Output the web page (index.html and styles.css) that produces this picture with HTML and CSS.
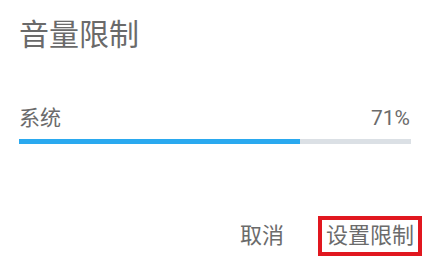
FILE: index.html
```html
<!DOCTYPE html>
<html lang="zh">
<head>
<meta charset="utf-8">
<link rel="stylesheet" href="styles.css">
</head>
<body>
<div class="dialog">
  <h1 class="title">音量限制</h1>
  <div class="row">
    <span class="label">系统</span>
    <span class="value">71%</span>
  </div>
  <div class="track"><div class="fill" style="width:71.7%"></div></div>
  <div class="actions">
    <button class="btn">取消</button>
    <button class="btn btn-marked">设置限制</button>
  </div>
</div>
</body>
</html>
```
FILE: styles.css
```css
html, body {
  margin: 0;
  padding: 0;
  background: #ffffff;
}
body {
  font-family: Roboto, "Noto Sans CJK SC", sans-serif;
  color: #6b6b6b;
}
.dialog {
  width: 433px;
  height: 259px;
  box-sizing: border-box;
  padding: 20px 22px 0 19px;
  display: flex;
  flex-direction: column;
}
.title {
  margin: 0;
  font-size: 30px;
  line-height: 30px;
  font-weight: 400;
  color: #6a6a6a;
}
.row {
  margin-top: 58px;
  display: flex;
  justify-content: space-between;
  align-items: center;
  font-size: 21px;
  line-height: 21px;
}
.value {
  margin-right: 1px;
}
.track {
  margin-top: 10px;
  height: 5px;
  background: #dbe0e5;
}
.fill {
  height: 100%;
  background: #2aa9ef;
}
.actions {
  margin-top: 76px;
  margin-right: -7px;
  display: flex;
  justify-content: flex-end;
  gap: 34px;
}
.btn {
  font-family: Roboto, "Noto Sans CJK SC", sans-serif;
  font-size: 22px;
  line-height: 32px;
  height: 32px;
  padding: 0 4px;
  border: 0;
  background: transparent;
  color: #6b6b6b;
}
.btn-marked {
  outline: 4px solid #e1171f;
}
```
